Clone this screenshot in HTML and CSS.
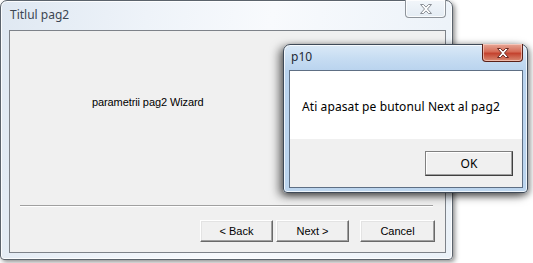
FILE: index.html
```html
<!DOCTYPE html>
<html>
<head>
<meta charset="utf-8">
<link rel="stylesheet" href="styles.css">
</head>
<body>
<div class="desktop">
  <div class="window main">
    <div class="titlebar">
      <span class="title">Titlul pag2</span>
      <div class="close inactive">
        <svg width="14" height="10" viewBox="0 0 14 10"><path d="M1.5 0.5h3l2.5 2.6 2.5-2.6h3l-4 4.5 4 4.5h-3l-2.5-2.6-2.5 2.6h-3l4-4.5z" fill="#fff" stroke="#8a8f96" stroke-width="1"/></svg>
      </div>
    </div>
    <div class="client">
      <div class="page"><span class="page-text">parametrii pag2 Wizard</span></div>
      <div class="sep"></div>
      <div class="buttons">
        <button class="btn back">&lt; Back</button>
        <button class="btn next">Next &gt;</button>
        <button class="btn cancel">Cancel</button>
      </div>
    </div>
  </div>

  <div class="window dialog">
    <div class="titlebar">
      <span class="title">p10</span>
      <div class="close active">
        <svg width="14" height="10" viewBox="0 0 14 10"><path d="M1.5 0.5h3l2.5 2.6 2.5-2.6h3l-4 4.5 4 4.5h-3l-2.5-2.6-2.5 2.6h-3l4-4.5z" fill="#fff" stroke="#6b2a22" stroke-width="1"/></svg>
      </div>
    </div>
    <div class="dclient">
      <div class="msg">Ati apasat pe butonul Next al pag2</div>
      <div class="dfoot"><button class="btn ok">OK</button></div>
    </div>
  </div>
</div>
</body>
</html>
```

FILE: styles.css
```css
html, body {
  margin: 0;
  padding: 0;
  background: #ffffff;
}
.desktop {
  position: relative;
  width: 533px;
  height: 263px;
  overflow: hidden;
}
.window {
  position: absolute;
  box-sizing: border-box;
  display: flex;
  flex-direction: column;
}
.main {
  left: 0;
  top: 0;
  width: 453px;
  height: 260px;
  border: 1px solid #5b636c;
  border-radius: 7px 7px 4px 4px;
  padding: 0 6px 6px 8px;
  background: linear-gradient(100deg, #dfe8f2 0%, #eef3f9 30%, #f8fafd 55%, #eaf1f8 100%);
  box-shadow: inset 0 0 0 1px rgba(255,255,255,0.85), 2px 2px 5px rgba(0,0,0,0.45);
}
.dialog {
  left: 283px;
  top: 44px;
  width: 245px;
  height: 149px;
  border: 1px solid #3f4a58;
  border-radius: 7px 7px 4px 4px;
  padding: 0 4px 4px 5px;
  background: linear-gradient(180deg, #dbe9f7 0px, #c6dcf2 14px, #b9d3ee 26px, #bcd5ee 100%);
  box-shadow: inset 0 0 0 1px rgba(255,255,255,0.75), -4px 3px 10px rgba(0,0,0,0.55), 2px 2px 6px rgba(0,0,0,0.4);
}
.titlebar {
  position: relative;
  display: flex;
  align-items: center;
  flex: none;
}
.main .titlebar { height: 29px; padding-left: 1px; }
.dialog .titlebar { height: 25px; padding-left: 2px; }
.title {
  font-family: "Noto Sans", "Open Sans", sans-serif;
  font-size: 12px;
  color: #1e2a36;
  padding-bottom: 2px;
}
.main .title { color: #3c4652; }
.close {
  position: absolute;
  top: -1px;
  height: 18px;
  box-sizing: border-box;
  border-radius: 0 0 4px 4px;
  display: flex;
  align-items: center;
  justify-content: center;
}
.close.inactive {
  right: 0px;
  width: 41px;
  border: 1px solid #8e949b;
  border-top: none;
  background: linear-gradient(180deg, #f2f6fa, #e4ecf4);
  box-shadow: inset 0 0 0 1px rgba(255,255,255,0.8);
}
.close.active {
  right: 0px;
  width: 41px;
  border: 1px solid #5a2018;
  border-top: none;
  background: linear-gradient(180deg, #e7a898 0%, #d66c57 45%, #c4432f 55%, #d98a72 100%);
  box-shadow: inset 0 0 0 1px rgba(255,220,210,0.6);
}
.client {
  flex: 1;
  box-sizing: border-box;
  border: 1px solid #7d8289;
  background: #f0f0f0;
  display: flex;
  flex-direction: column;
  padding: 0 10px 10px 10px;
}
.page {
  flex: 1;
  padding: 61px 0 0 72px;
}
.page-text {
  font-family: "Liberation Sans", Arial, sans-serif;
  font-size: 11px;
  line-height: 13px;
  letter-spacing: -0.1px;
  color: #000;
}
.sep {
  border-top: 1px solid #a0a0a0;
  border-bottom: 1px solid #ffffff;
  height: 0;
  margin-right: 2px;
  margin-bottom: 13px;
}
.buttons {
  display: flex;
  justify-content: flex-end;
}
.btn {
  box-sizing: border-box;
  height: 22px;
  margin: 0;
  padding: 0;
  font-family: "Liberation Sans", Arial, sans-serif;
  font-size: 11px;
  color: #000;
  background: #f0f0f0;
  border-top: 1px solid #ffffff;
  border-left: 1px solid #ffffff;
  border-right: 1px solid #696969;
  border-bottom: 1px solid #696969;
  box-shadow: inset -1px -1px 0 #a0a0a0, inset 1px 1px 0 #e3e3e3;
}
.back { width: 73px; }
.next { width: 73px; margin-left: 3px; }
.cancel { width: 75px; margin-left: 11px; }
.dclient {
  flex: 1;
  box-sizing: border-box;
  border: 1px solid #5e6f84;
  display: flex;
  flex-direction: column;
  background: #ffffff;
}
.msg {
  height: 68px;
  box-sizing: border-box;
  padding: 28px 0 0 12px;
  font-family: "Noto Sans", "Open Sans", sans-serif;
  font-size: 12px;
  line-height: 15px;
  letter-spacing: 0.1px;
  color: #000;
  background: #ffffff;
}
.dfoot {
  flex: 1;
  background: #f0f0f0;
  display: flex;
  justify-content: flex-end;
  align-items: flex-start;
  padding: 12px 9px 0 0;
}
.ok {
  width: 88px;
  height: 25px;
  font-family: "Noto Sans", "Open Sans", sans-serif;
  font-size: 12px;
  border: 1px solid #808080;
  border-right-color: #404040;
  border-bottom-color: #404040;
  box-shadow: inset -1px -1px 0 #a0a0a0, inset 1px 1px 0 #ffffff;
}
```
